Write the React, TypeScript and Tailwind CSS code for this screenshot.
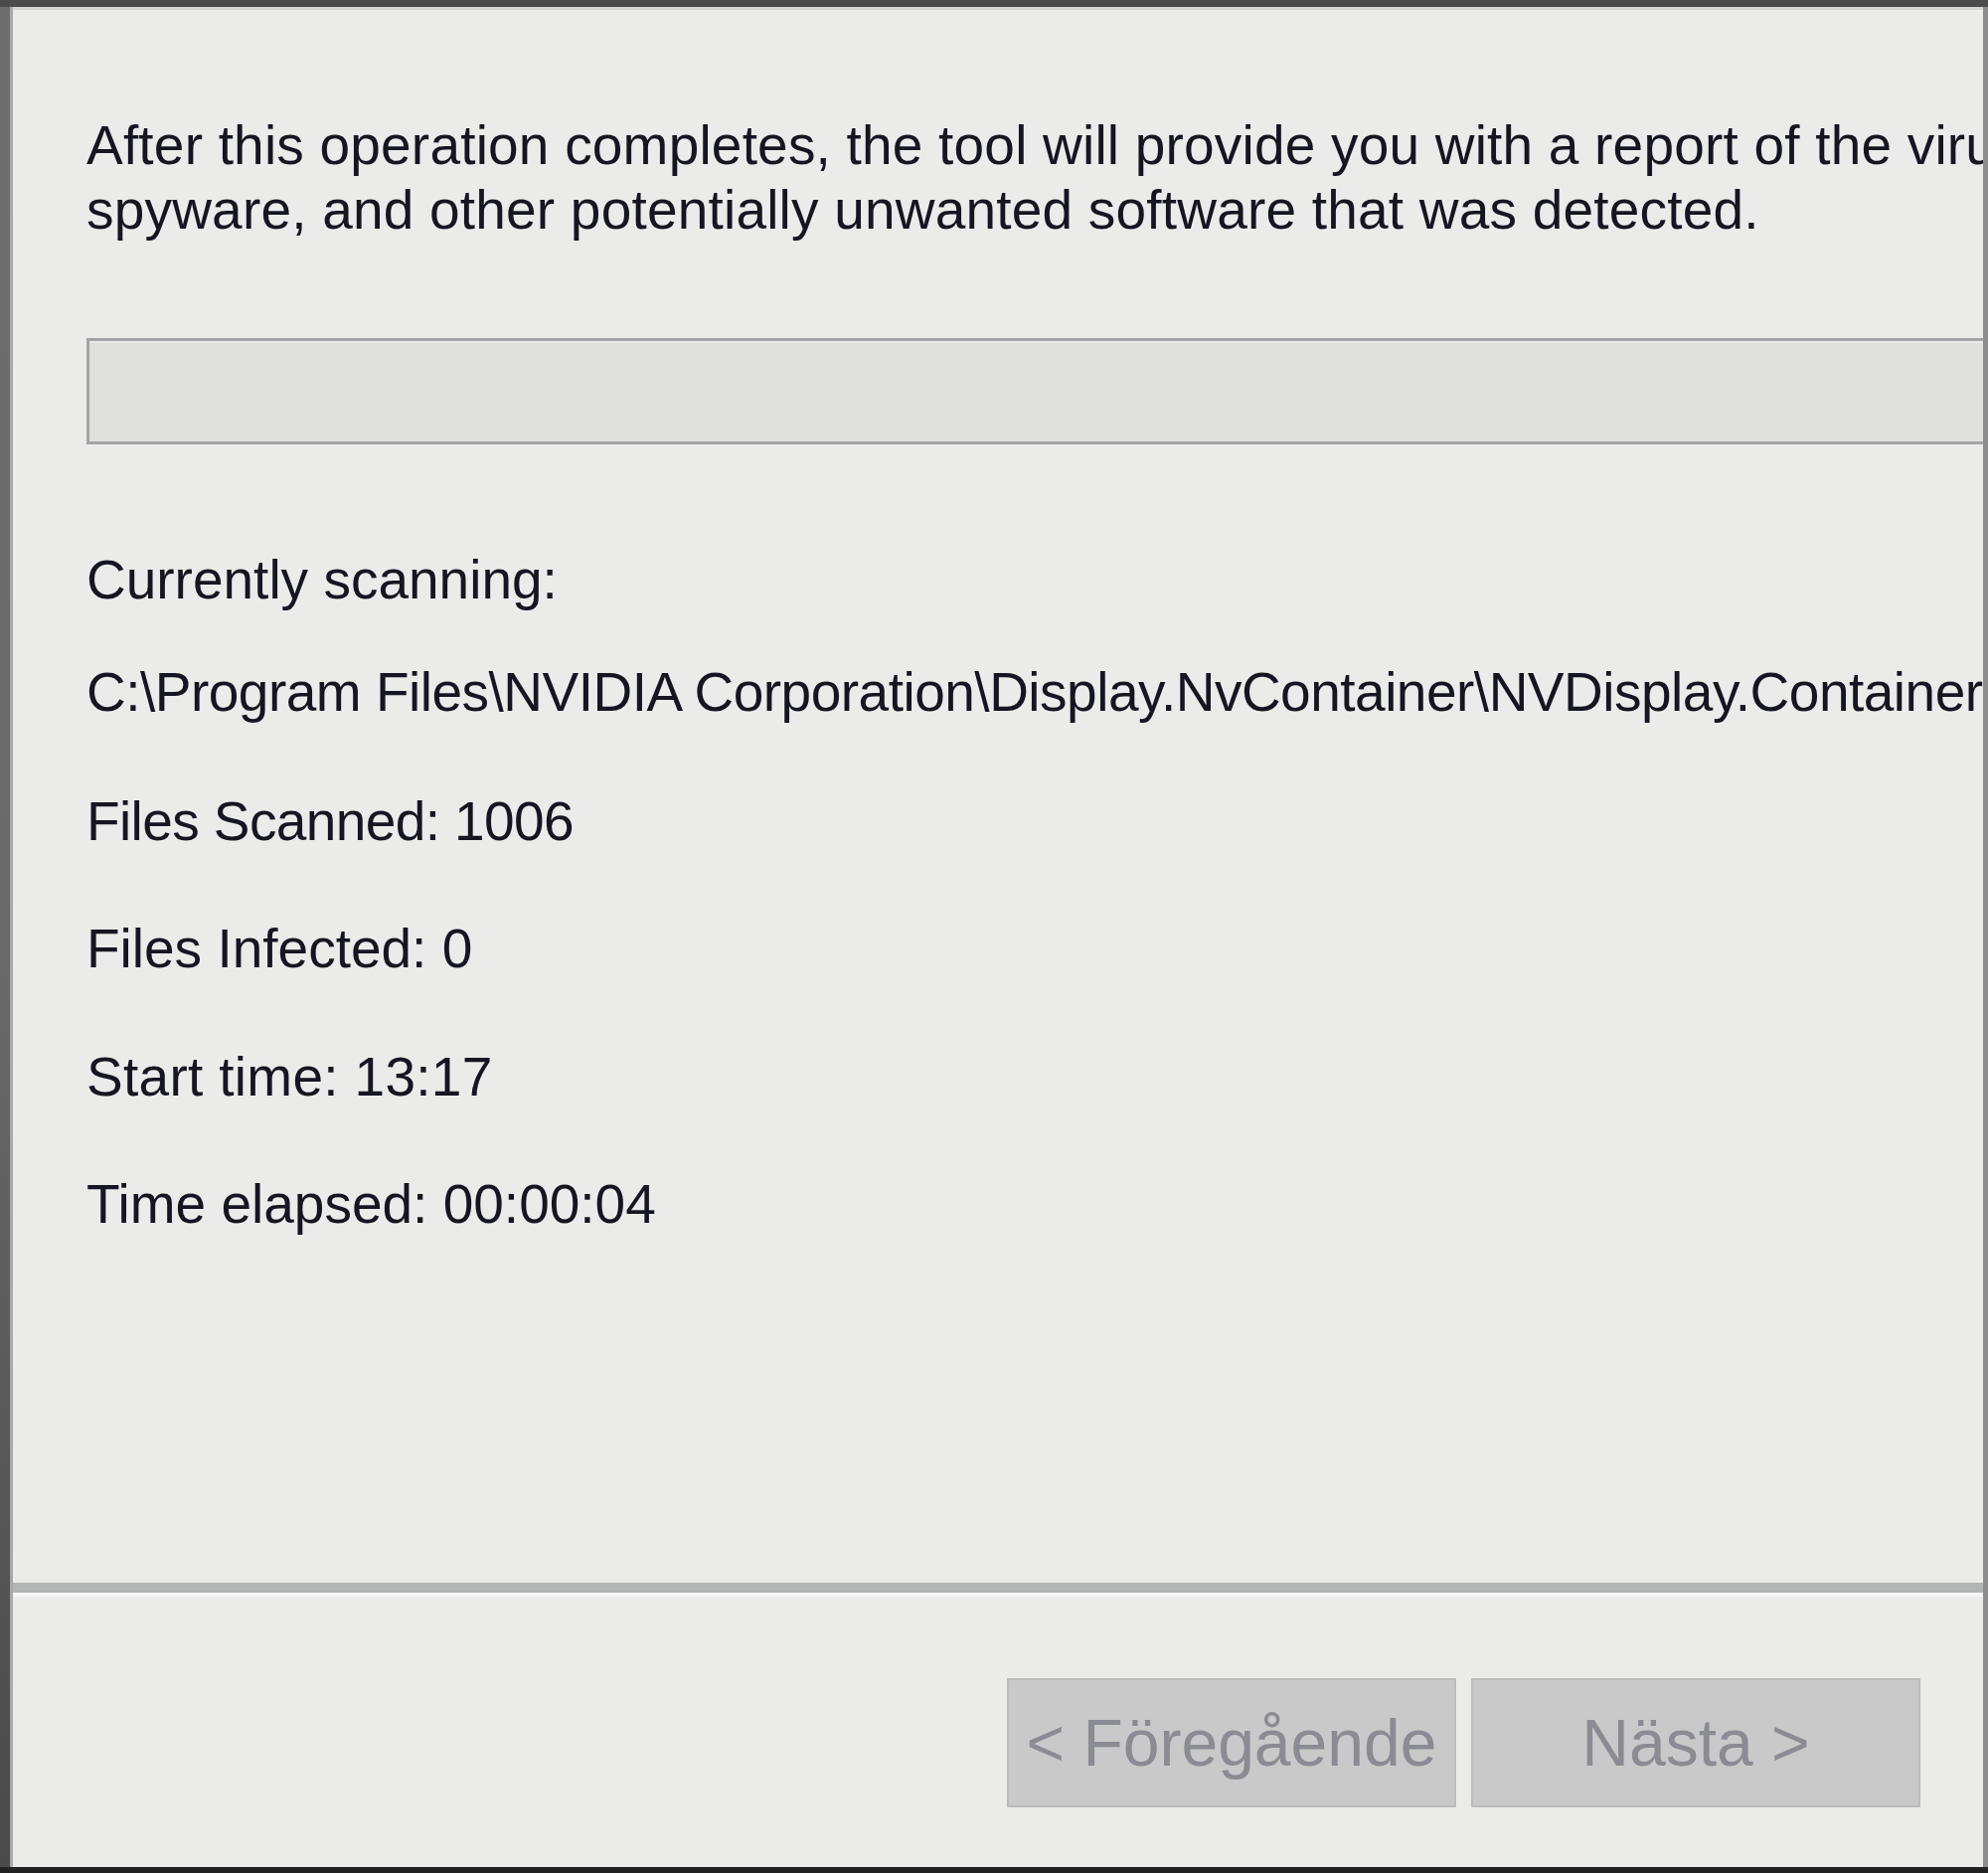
export default function App() {
  const font = { fontFamily: '"Liberation Sans", Arial, sans-serif' };
  return (
    <div className="flex h-[1884px] w-[2000px] flex-col overflow-hidden bg-[#ebebea]" style={font}>
      <div className="h-[7px] shrink-0 bg-[#4b4b4b]" />
      <div className="flex min-h-0 flex-1">
        <div className="flex w-[13px] shrink-0">
          <div className="w-[10px] bg-gradient-to-b from-[#6e6e6e] via-[#6a6a6a] to-[#4a4a4a]" />
          <div className="w-[3px] bg-[#a9a9a9]" />
        </div>
        <div className="flex min-w-0 flex-1 flex-col overflow-hidden">
          <div className="h-[3px] shrink-0 bg-[#d6d6d6]" />
          <main className="flex flex-1 flex-col pl-[74px] text-[55px] leading-[65px] text-[#161622]">
            <p className="mt-[104px] whitespace-nowrap tracking-[0.2px]">
              After this operation completes, the tool will provide you with a report of the viruses,
              <br />
              spyware, and other potentially unwanted software that was detected.
            </p>
            <div className="mt-[96px] h-[107px] shrink-0 border-[3px] border-r-0 border-[#a2a4a6] bg-[#e0e1df] shadow-[inset_0_2px_0_#e9eae8]" />
            <div className="mt-[104px] whitespace-nowrap">Currently scanning:</div>
            <div className="mt-[48px] whitespace-nowrap tracking-[-0.5px]">
              C:\Program Files\NVIDIA Corporation\Display.NvContainer\NVDisplay.Container.exe
            </div>
            <div className="mt-[65px] whitespace-nowrap tracking-[-0.6px]">Files Scanned: 1006</div>
            <div className="mt-[63px] whitespace-nowrap">Files Infected: 0</div>
            <div className="mt-[64px] whitespace-nowrap tracking-[0.3px]">Start time: 13:17</div>
            <div className="mt-[63px] whitespace-nowrap">Time elapsed: 00:00:04</div>
          </main>
          <div className="h-[10px] shrink-0 bg-[#b3b4b4]" />
          <div className="h-[4px] shrink-0 bg-[#f6f6f6]" />
          <div className="flex h-[272px] shrink-0 items-start gap-[15px] pl-[1000px] pt-[82px]">
            <button
              disabled
              className="flex h-[130px] w-[452px] items-center justify-center border-2 border-[#bcbcbc] bg-[#c9c9c9] text-[66px] text-[#8b8b93]"
            >
              &lt; Föregående
            </button>
            <button
              disabled
              className="flex h-[130px] w-[452px] items-center justify-center border-2 border-[#bcbcbc] bg-[#c9c9c9] text-[66px] text-[#8b8b93]"
            >
              Nästa &gt;
            </button>
          </div>
        </div>
        <div className="w-[5px] shrink-0 bg-[#8d8d8d]" />
      </div>
      <div className="h-[6px] shrink-0 bg-[#222222]" />
    </div>
  );
}
